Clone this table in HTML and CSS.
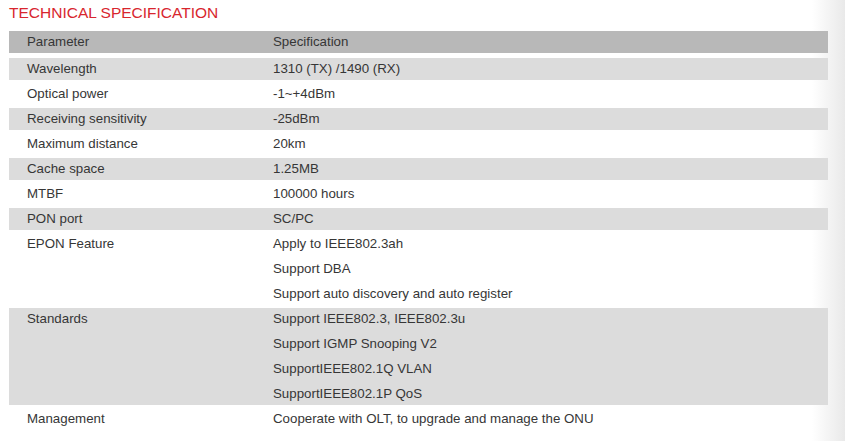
FILE: index.html
```html
<!DOCTYPE html>
<html>
<head>
<meta charset="utf-8">
<link rel="stylesheet" href="styles.css">
</head>
<body>
<div class="page">
  <h1 class="title">TECHNICAL SPECIFICATION</h1>
  <div class="spec-table">
    <div class="row head"><div class="param">Parameter</div><div class="val"><div>Specification</div></div></div>
    <div class="row grey"><div class="param">Wavelength</div><div class="val"><div>1310 (TX) /1490 (RX)</div></div></div>
    <div class="row"><div class="param">Optical power</div><div class="val"><div>-1~+4dBm</div></div></div>
    <div class="row grey"><div class="param">Receiving sensitivity</div><div class="val"><div>-25dBm</div></div></div>
    <div class="row"><div class="param">Maximum distance</div><div class="val"><div>20km</div></div></div>
    <div class="row grey"><div class="param">Cache space</div><div class="val"><div>1.25MB</div></div></div>
    <div class="row"><div class="param">MTBF</div><div class="val"><div>100000 hours</div></div></div>
    <div class="row grey"><div class="param">PON port</div><div class="val"><div>SC/PC</div></div></div>
    <div class="row"><div class="param">EPON Feature</div><div class="val"><div>Apply to IEEE802.3ah</div><div>Support DBA</div><div>Support auto discovery and auto register</div></div></div>
    <div class="row grey"><div class="param">Standards</div><div class="val"><div>Support IEEE802.3, IEEE802.3u</div><div>Support IGMP Snooping V2</div><div>SupportIEEE802.1Q VLAN</div><div>SupportIEEE802.1P QoS</div></div></div>
    <div class="row"><div class="param">Management</div><div class="val"><div>Cooperate with OLT, to upgrade and manage the ONU</div></div></div>
  </div>
</div>
</body>
</html>
```
FILE: styles.css
```css
html {
  background: linear-gradient(to right, #ffffff 0, #ffffff 812px, #e9e9e9 845px);
  min-height: 100%;
}
body {
  margin: 0;
  font-family: "Liberation Sans", Arial, sans-serif;
  color: #363636;
}
.page {
  padding: 3px 17px 0 9px;
}
.title {
  margin: 0 0 8px 0;
  font-size: 15.5px;
  font-weight: normal;
  line-height: 20px;
  color: #d8262e;
}
.spec-table {
  display: flex;
  flex-direction: column;
}
.row {
  display: grid;
  grid-template-columns: 246px 1fr;
  padding-left: 18px;
  font-size: 13.3px;
  line-height: 25px;
}
.row.head {
  background: #b8b8b8;
  line-height: 22px;
  margin-bottom: 3px;
}
.row.grey {
  background: linear-gradient(to bottom, transparent 0, transparent 2px, #dcdcdc 2px, #dcdcdc calc(100% - 1px), transparent calc(100% - 1px));
}
```
